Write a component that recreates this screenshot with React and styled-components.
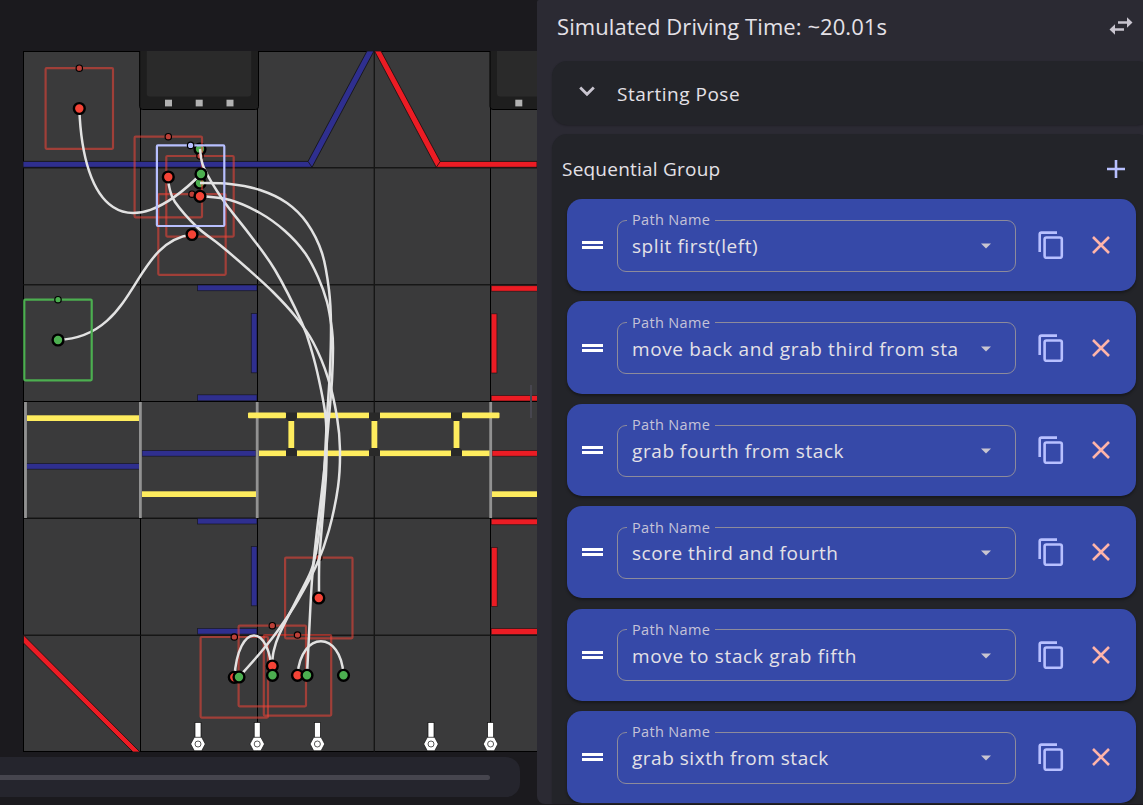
import React from "react";
import styled, { createGlobalStyle } from "styled-components";

const Global = createGlobalStyle`
  html, body { margin: 0; background: #1b1a1e; overflow: hidden; }
  * { box-sizing: border-box; }
`;

const Page = styled.div`
  display: flex;
  width: 1143px;
  height: 805px;
  overflow: hidden;
  background: #1b1a1e;
  color: #e4e1e7;
  font-family: "Open Sans", "Noto Sans", sans-serif;
`;

const Editor = styled.main`
  position: relative;
  flex: 0 0 537px;
  display: flex;
  flex-direction: column;
  overflow: hidden;
`;

const Field = styled.svg`
  display: block;
  flex: 0 0 757px;
  width: 537px;
`;

const Timeline = styled.div`
  display: flex;
  align-items: center;
  width: 520px;
  height: 40px;
  padding-right: 30px;
  border-radius: 0 14px 14px 0;
  background: #25252d;
`;

const Track = styled.div`
  flex: 1;
  height: 5px;
  border-radius: 0 3px 3px 0;
  background: #46454e;
`;

const Splitter = styled.div`
  position: absolute;
  left: 530px;
  top: 385px;
  width: 2px;
  height: 33px;
  background: #47464f;
`;

const Sidebar = styled.aside`
  flex: 0 0 620px;
  height: 804px;
  padding: 0 5px 2px 15px;
  display: flex;
  flex-direction: column;
  border-radius: 2px 0 0 8px;
  background: #2b2a33;
  overflow: hidden;
`;

const Header = styled.header`
  flex: 0 0 61px;
  display: flex;
  align-items: center;
  justify-content: space-between;
  padding: 0 19px 10px 5px;
`;

const Title = styled.h1`
  margin: 0;
  padding-top: 1px;
  font-size: 22px;
  font-weight: 400;
  line-height: 30px;
  letter-spacing: ${(p) => p.$track || 0}px;
  white-space: nowrap;
`;

const Card = styled.section`
  flex: none;
  width: 600px;
  border-radius: 15px;
  background: #232429;
  box-shadow: 0 1px 2px rgba(0, 0, 0, 0.25);
`;

const PoseCard = styled(Card)`
  height: 63.5px;
  margin-bottom: 9px;
  display: flex;
  align-items: center;
  padding: 2px 26px 0 27px;
`;

const CardTitle = styled.h2`
  margin: 0;
  font-size: 19px;
  font-weight: 400;
  line-height: 26px;
  letter-spacing: ${(p) => p.$track || 0}px;
`;

const Chevron = styled.svg`
  width: 16px;
  height: 12px;
  margin: -5px 22px 0 0;
`;

const GroupCard = styled(Card)`
  height: 669px;
  padding: 0 16px 0 15px;
  overflow: hidden;
  border-radius: 15px 15px 0 0;
`;

const GroupHeader = styled.div`
  display: flex;
  align-items: center;
  justify-content: space-between;
  height: 65.5px;
  margin-left: -5px;
  padding: 6px 11px 0 0;
`;

const Rows = styled.div`
  display: flex;
  flex-direction: column;
  gap: 10.1px;
`;

const Row = styled.article`
  flex: none;
  display: flex;
  align-items: center;
  width: 569px;
  height: 92.3px;
  padding-left: 15px;
  border-radius: 15px;
  background: #3649a8;
  box-shadow: 0 2px 3px rgba(0, 0, 0, 0.35);
`;

const DragHandle = styled.div`
  width: 21px;
  height: 8px;
  margin-right: 14px;
  border: solid #fff;
  border-width: 3px 0;
`;

const Select = styled.fieldset`
  display: flex;
  align-items: center;
  justify-content: space-between;
  width: 399px;
  height: 61.5px;
  min-width: 0;
  margin: -8px 22px 0 0;
  padding: 0 24px 9px 14px;
  border: 1px solid #8d8b9b;
  border-radius: 9px;
`;

const Legend = styled.legend`
  margin-left: -5px;
  padding: 0 5px;
  font-size: 14.5px;
  line-height: 20px;
  letter-spacing: 0.35px;
  color: #c5c3d8;
`;

const Value = styled.span`
  flex: 0 0 325px;
  white-space: nowrap;
  font-size: 19px;
  line-height: 26px;
  letter-spacing: ${(p) => p.$track || 0}px;
`;

const Caret = styled.svg`
  width: 10px;
  height: 6px;
`;

const Glyph = styled.svg`
  flex: none;
  width: ${(p) => p.$w}px;
  height: ${(p) => p.$h}px;
  margin-right: ${(p) => p.$gap || 0}px;
`;

const RED = "#f44336";
const GREEN = "#4caf50";
const BLUE_TAPE = "#2f2f8f";
const RED_TAPE = "#ec1c24";
const YELLOW = "#feec5e";

/* Catmull-Rom spline through the sampled trajectory points */
const spline = (pts) => {
  let d = `M${pts[0][0]} ${pts[0][1]}`;
  for (let i = 0; i < pts.length - 1; i++) {
    const a = pts[i - 1] || pts[i];
    const b = pts[i];
    const c = pts[i + 1];
    const e = pts[i + 2] || c;
    d += `C${b[0] + (c[0] - a[0]) / 6} ${b[1] + (c[1] - a[1]) / 6} ${c[0] - (e[0] - b[0]) / 6} ${c[1] - (e[1] - b[1]) / 6} ${c[0]} ${c[1]}`;
  }
  return d;
};

const curves = [
  "M58 340C138 337 131 242 192 234.5",
  "M201 174C125 250 83 208 79.3 108.5",
  "M343.5 675C341 630 301 630 297.5 675",
  "M272 675C270 622 238 622 234.5 677",
  spline([[200, 149], [204, 168], [223, 200], [250, 235], [275, 270], [302, 323], [312, 352], [319, 380], [325, 412], [326.5, 435], [326, 475], [322, 525], [319.3, 560], [319, 598]]),
  spline([[200, 183], [230, 184], [260, 190], [287, 203], [307, 223], [322, 253], [329, 290], [331, 325], [330, 370], [327, 417], [325, 457], [322, 505], [317, 547], [311, 571], [297, 599], [279, 635], [273.5, 652], [272, 666]]),
  spline([[200, 196], [230, 200], [260, 213], [285, 231], [305, 253], [318, 277], [327, 302], [332, 330], [333, 348], [332, 380], [329, 417], [326, 452], [322, 490], [316.5, 535], [312, 580], [309, 635], [307, 675]]),
  spline([[168, 177], [169.5, 188], [175, 202], [197, 227], [220, 245], [248, 269], [273, 292], [295, 316], [313, 342], [328, 378], [337, 417], [340, 450], [338, 487], [329, 530], [317, 564], [298, 600], [279, 629], [261, 652], [239, 677]]),
];

const poses = [[79.3, 108.5], [168.3, 177], [200, 196.3], [192, 234.5], [318.8, 598], [272.3, 666], [297.5, 675.3], [234.3, 677.3]];

const Robot = ({ x, y, color, opacity = 1 }) => (
  <>
    <rect x={x - 33.7} y={y - 40.3} width="67.4" height="80.6" rx="1" fill="none" stroke={color} strokeWidth="2.2" strokeOpacity={opacity} />
    <circle cx={x} cy={y - 40.3} r="3.2" fill={opacity < 1 ? "#bd4038" : color} stroke="#000" strokeWidth="1.2" />
  </>
);

const Node = ({ x, y, color }) => (
  <circle cx={x} cy={y} r="5.4" fill={color} stroke="#000" strokeWidth="2.4" />
);

const Tape = ({ r, color }) => (
  <rect x={r[0]} y={r[1]} width={r[2]} height={r[3]} fill={color} stroke="#111" strokeOpacity=".7" strokeWidth=".8" />
);

const Strip = ({ r }) => (
  <rect x={r[0]} y={r[1]} width={r[2]} height={r[3]} rx={r[4] || 0} fill={YELLOW} />
);

const blueTapes = [
  [197.5, 285, 59.5, 5.7], [251.3, 313.5, 5.7, 59.3], [197.5, 394.8, 59.5, 6],
  [142, 450.5, 114, 5.7], [26.5, 463.5, 113, 5.7],
  [197.5, 518.3, 59.5, 5.7], [251.3, 546.5, 5.7, 59.3], [197.5, 628.4, 59.5, 5.7],
];
const redTapes = [
  [491.2, 285.7, 60, 5.5], [491.2, 313.8, 5.7, 59.2], [491.2, 395.5, 60, 5.5], [492, 450.5, 60, 5.7],
  [491.2, 519, 60, 5.7], [491.4, 547.5, 5.8, 59], [491.2, 628.6, 60, 6],
];
const strips = [
  [27, 415.3, 112, 5.7], [142, 491.3, 114, 5.7], [492, 491.3, 60, 5.7],
  [248, 412.6, 38, 5.6, 1], [297, 412.6, 72, 5.6], [380, 412.6, 71, 5.6], [462, 412.6, 37.5, 5.6, 1],
  [259, 450.5, 27, 5.6], [297, 450.5, 72, 5.6], [380, 450.5, 71, 5.6], [462, 450.5, 27.5, 5.6],
];

const Hatch = ({ x }) => (
  <g>
    <rect x={x} y="40" width="118.8" height="69.5" rx="3" fill="#1e1e1e" stroke="#000" />
    <rect x={x + 7} y="40" width="104.5" height="56.5" rx="3" fill="#2a2a2a" />
    {[25.3, 56, 86.8].map((o) => (
      <rect key={o} x={x + o} y="99.7" width="7" height="6.7" fill="#b2b2b2" />
    ))}
  </g>
);

const Bolt = ({ x }) => (
  <g stroke="#111" strokeWidth=".7">
    <rect x={x - 3} y="722.5" width="6" height="16" fill="#fff" />
    <path d={`M${x - 7.3} 744L${x - 3.7} 737.3H${x + 3.7}L${x + 7.3} 744L${x + 3.7} 750.8H${x - 3.7}Z`} fill="#fff" />
    <circle cx={x} cy="744" r="3" fill="#fff" />
  </g>
);

const FieldMap = () => (
  <Field viewBox="0 0 537 757">
    <defs>
      <clipPath id="field"><rect x="23" y="51" width="514" height="701" /></clipPath>
    </defs>
    <g clipPath="url(#field)">
      <rect x="23" y="51" width="514" height="701" fill="#3a3a3b" />
      <path d="M23.5 51V752M140.5 51V752M257.5 51V752M490.5 51V752M23 51.5H537M23 401.5H537M23 518.2H537M23 751.5H537" stroke="#000" fill="none" />
      <path d="M374.3 51V752M23 167.7H537M23 284.7H537M23 635.2H537" stroke="#111" strokeOpacity=".85" strokeWidth="1.4" fill="none" />
      <g stroke="#111" strokeWidth=".8">
        <path d="M23 161.4H308L367 51H374L312 167.3H23ZM308 161.4L312 167.3" fill={BLUE_TAPE} />
        <path d="M537 161.4H440.3L381 51H374.5L436.3 167.3H537ZM440.3 161.4L436.3 167.3" fill={RED_TAPE} />
        <path d="M23.5 635V643L133 752H140Z" fill={RED_TAPE} />
      </g>
      <Hatch x={139.7} />
      <Hatch x={490} />
      {blueTapes.map((r) => <Tape key={r.join()} r={r} color={BLUE_TAPE} />)}
      {redTapes.map((r) => <Tape key={r.join()} r={r} color={RED_TAPE} />)}
      <path d="M25.5 402V518M140.4 402V518M257.2 402V518M490.7 402V518" stroke="#929292" strokeWidth="2.8" />
      {[291.3, 374.4, 456.5].map((x) => (
        <g key={x}>
          <path d={`M${x - 5.5} 412.5h11v6l-2.5 2.5h-6l-2.5-2.5zM${x - 5.5} 456h11v-6l-2.5-2.5h-6l-2.5 2.5z`} fill="#292929" />
          <rect x={x - 2.9} y="421" width="5.8" height="27" fill={YELLOW} />
        </g>
      ))}
      {strips.map((r) => <Strip key={r.join()} r={r} />)}
      {[198, 257.2, 317.4, 431, 490.6].map((x) => <Bolt key={x} x={x} />)}
    </g>
    <Node x={200} y={149} color={GREEN} />
    <Node x={200} y={183} color={GREEN} />
    {poses.map((p) => <Robot key={p.join()} x={p[0]} y={p[1]} color={RED} opacity={0.55} />)}
    {curves.map((d) => <path key={d} d={d} fill="none" stroke="#e2e2e2" strokeWidth="2.5" />)}
    <Robot x={58} y={340} color={GREEN} />
    {poses.map((p) => <Node key={p.join()} x={p[0]} y={p[1]} color={RED} />)}
    {[[58, 340], [201, 174], [239, 677], [272.5, 675.3], [307, 675.3], [343.5, 675.3]].map((p) => (
      <Node key={p.join()} x={p[0]} y={p[1]} color={GREEN} />
    ))}
    <Robot x={190.6} y={185.7} color="#b8c0ff" />
  </Field>
);

const paths = [
  ["split first(left)", 0.57],
  ["move back and grab third from sta", 0.62],
  ["grab fourth from stack", 0.58],
  ["score third and fourth", 0.52],
  ["move to stack grab fifth", 0.68],
  ["grab sixth from stack", 0.52],
];

const PathRow = ({ name, track }) => (
  <Row>
    <DragHandle />
    <Select>
      <Legend>Path Name</Legend>
      <Value $track={track}>{name}</Value>
      <Caret viewBox="0 0 10 6"><path d="M0 .5H10L5 5.5Z" fill="#c9c5d0" /></Caret>
    </Select>
    <Glyph $w={26} $h={28} $gap={28} viewBox="0 0 26 28">
      <path d="M19 1.6H3.5Q1.7 1.6 1.7 3.4V21M8.4 6.5H22Q23.8 6.5 23.8 8.3V25Q23.8 26.8 22 26.8H8.4Q6.6 26.8 6.6 25V8.3Q6.6 6.5 8.4 6.5Z" fill="none" stroke="#b8c0ff" strokeWidth="2.6" />
    </Glyph>
    <Glyph $w={18} $h={18} viewBox="0 0 18 18">
      <path d="M1 1L17 17M17 1L1 17" stroke="#ffb4a9" strokeWidth="2.6" />
    </Glyph>
  </Row>
);

export default function App() {
  return (
    <>
      <Global />
      <Page>
        <Editor>
          <FieldMap />
          <Timeline><Track /></Timeline>
          <Splitter />
        </Editor>
        <Sidebar>
          <Header>
            <Title $track={0.07}>Simulated Driving Time: ~20.01s</Title>
            <Glyph $w={24} $h={18} viewBox="0 0 24 18">
              <path d="M9 4.2H18V.2L23.5 5.5L18 10.8V6.8H9ZM15 11.2H6V7.2L.5 12.5L6 17.8V13.8H15Z" fill="#c9c5d0" />
            </Glyph>
          </Header>
          <PoseCard>
            <Chevron viewBox="0 0 16 12"><path d="M1.2 2.5L8 9.3L14.8 2.5" fill="none" stroke="#c9c5d0" strokeWidth="2.8" /></Chevron>
            <CardTitle $track={0.5}>Starting Pose</CardTitle>
          </PoseCard>
          <GroupCard>
            <GroupHeader>
              <CardTitle $track={0.22}>Sequential Group</CardTitle>
              <Glyph $w={18} $h={18} viewBox="0 0 18 18"><path d="M9 0V18M0 9H18" stroke="#b8c0ff" strokeWidth="2.6" /></Glyph>
            </GroupHeader>
            <Rows>
              {paths.map(([name, track]) => <PathRow key={name} name={name} track={track} />)}
            </Rows>
          </GroupCard>
        </Sidebar>
      </Page>
    </>
  );
}
